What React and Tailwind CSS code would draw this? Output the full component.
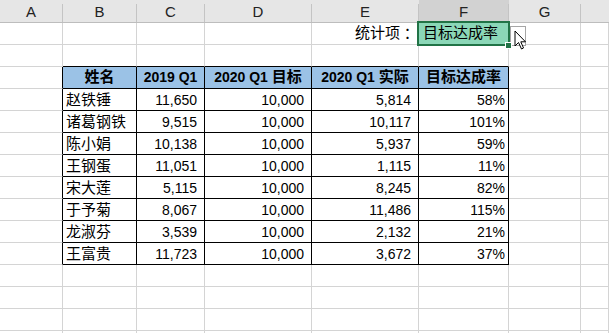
import React from "react";

const WCLS = ["w-[63px]", "w-[74px]", "w-[68px]", "w-[107px]", "w-[107px]", "w-[90px]", "w-[72px]", "flex-1"];
const LETTERS = ["A", "B", "C", "D", "E", "F", "G", ""];

const DATA = [
  ["赵铁锤", "11,650", "10,000", "5,814", "58%"],
  ["诸葛钢铁", "9,515", "10,000", "10,117", "101%"],
  ["陈小娟", "10,138", "10,000", "5,937", "59%"],
  ["王钢蛋", "11,051", "10,000", "1,115", "11%"],
  ["宋大莲", "5,115", "10,000", "8,245", "82%"],
  ["于予菊", "8,067", "10,000", "11,486", "115%"],
  ["龙淑芬", "3,539", "10,000", "2,132", "21%"],
  ["王富贵", "11,723", "10,000", "3,672", "37%"],
];

function cellContent(r, c) {
  if (r === 1 && c === 4)
    return (
      <div className="flex h-full items-center justify-end pr-[3px] text-[15px]">
        统计项<span className="font-['Noto_Sans_CJK_TC',sans-serif]">：</span>
      </div>
    );
  if (r === 1 && c === 5)
    return <div className="flex h-full items-center pl-[4px] text-[15px]">目标达成率</div>;
  if (r === 3 && c >= 1 && c <= 5) {
    const labels = [
      null,
      <span className="text-[15px]">姓名</span>,
      <span>2019 Q1</span>,
      <span>2020 Q1 <span className="text-[15px]">目标</span></span>,
      <span>2020 Q1 <span className="text-[15px]">实际</span></span>,
      <span className="text-[15px]">目标达成率</span>,
    ];
    return <div className="flex h-full items-center justify-center font-bold text-[14px]">{labels[c]}</div>;
  }
  if (r >= 4 && r <= 11 && c >= 1 && c <= 5) {
    const v = DATA[r - 4][c - 1];
    if (c === 1) return <div className="flex h-full items-center pl-[3px] pt-[1px] text-[15px]">{v}</div>;
    if (c === 5) return <div className="flex h-full items-center justify-end pr-[3px] pt-[1px] text-[14px]">{v}</div>;
    return <div className="flex h-full items-center justify-end pr-[7px] pt-[1px] text-[14px]">{v}</div>;
  }
  return null;
}

function cellClass(r, c) {
  const inTableRow = r >= 3 && r <= 11;
  const rBlack = inTableRow && c <= 5;
  const bBlack = r >= 2 && r <= 11 && c >= 1 && c <= 5;
  let bg = "";
  if (r === 3 && c >= 1 && c <= 5) bg = "bg-[#9bc2e6]";
  if (r === 1 && c === 5) bg = "bg-[#8bd7b7]";
  return [
    WCLS[c],
    "shrink-0 h-full border-r border-b",
    rBlack ? "border-r-black" : "border-r-[#d4d4d4]",
    bBlack ? "border-b-black" : "border-b-[#d4d4d4]",
    bg,
  ].join(" ");
}

export default function App() {
  const rows = Array.from({ length: 15 }, (_, i) => i + 1);
  return (
    <div className="relative w-[609px] h-[333px] overflow-hidden bg-white text-black font-['Liberation_Sans','Noto_Sans_CJK_SC',sans-serif]">
      <div className="flex h-[23px] bg-[#e6e6e6] border-b border-[#bdbdbd]">
        {LETTERS.map((l, i) => (
          <div key={i} className={`${WCLS[i]} shrink-0 flex ${i === 5 ? "bg-[#d2d2d2]" : ""}`}>
            <div className="flex-1 text-center pt-[3px] leading-[18px] text-[15px] text-[#222]">{l}</div>
            {i < 7 && <div className="w-px mt-[4px] bg-[#c4c4c4]" />}
          </div>
        ))}
      </div>
      {rows.map((r) => (
        <div key={r} className="flex h-[22px]">
          {LETTERS.map((_, c) => (
            <div key={c} className={cellClass(r, c)}>
              {cellContent(r, c)}
            </div>
          ))}
        </div>
      ))}

      <div className="absolute left-[510px] top-[26px] w-[16px] h-[20px] border border-[#a6a6a6] bg-white" />
      <div className="absolute left-[417px] top-[21px] w-[93px] h-[25px] border-2 border-[#217346]" />
      <div className="absolute left-[505px] top-[42px] w-[7px] h-[7px] bg-[#217346] border border-white" />
      <svg className="absolute left-[514px] top-[30px]" width="14" height="21" viewBox="0 0 14 21">
        <path d="M1 1 L1 16 L4.5 12.5 L7.5 19 L9.5 18 L6.8 11.8 L11.5 11.8 Z" fill="white" stroke="black" strokeWidth="1" strokeLinejoin="miter" />
      </svg>
    </div>
  );
}
